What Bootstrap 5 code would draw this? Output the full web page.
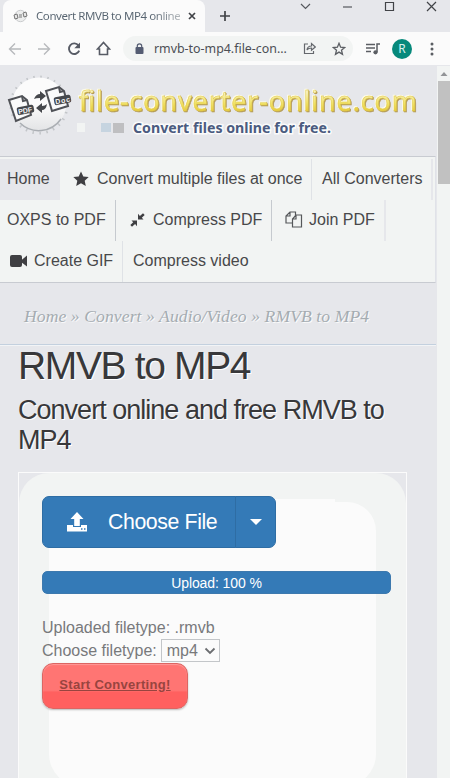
<!DOCTYPE html>
<html lang="en">
<head>
<meta charset="utf-8">
<title>Convert RMVB to MP4 online</title>
<link href="https://cdn.jsdelivr.net/npm/bootstrap@5.3.0/dist/css/bootstrap.min.css" rel="stylesheet">
<style>
:root{--page:#e6e7eb;--soft:#f2f4f3;--paper:#fbfbfb;--blue:#347ab7;--ink:#3f3f42}
body{width:450px;height:778px;background:var(--page);font-family:"Liberation Sans",sans-serif;font-size:16px;line-height:20px;color:var(--ink)}
svg{display:block;flex:none}
.tabstrip{height:32px}
.browser-tab{width:202px;margin-left:3px;background:var(--paper);border-radius:8px 8px 0 0;padding-left:10px}
.tab-title{font:11.5px/32px "Noto Sans",sans-serif;letter-spacing:-.42px;width:144px;margin-left:8px;white-space:nowrap;background:linear-gradient(90deg,#56636f 80%,#b5babe);-webkit-background-clip:text;background-clip:text;color:transparent}
.win{width:42px;height:14px}
.win-group{margin-right:-6px}
.plus{margin-left:14px}
.toolbar{height:33px;background:var(--paper)}
.tool{width:29.5px;display:flex;justify-content:center}
.omni{width:230px;height:25px;border-radius:13px;background:var(--soft);margin-left:5px}
.lock{margin-left:12px}.share{margin-left:16px}.star{margin-left:16px}.queue{margin-left:12px}.dots{margin-left:18px}
.address{font:12.4px/24px "Noto Sans",sans-serif;width:133px;margin-left:10px;white-space:nowrap;color:#4c4f55}
.avatar{width:20px;height:20px;border-radius:50%;background:#06897b;color:#d8f0ec;font:12px/20px "Noto Sans",sans-serif;text-align:center;margin-left:11px}
.viewport{margin-top:1px;height:712px}
.content{width:437px;height:712px;overflow:hidden}
.scroller{width:13px;background:var(--soft);padding:5px 0 0 1px}
.thumb{height:103px;background:#c1c1c1;margin-top:5px}
.logo-row{height:90px}
.gold-text{filter:drop-shadow(-1px -1px 0 #fdfbe8) drop-shadow(1px 1px 0 #b39a58)}
.menu{height:127px;width:436px;background:var(--soft);border:1px solid #c8cbd1;border-width:1px 1px 1px 0;border-right-color:#e0e2e8;padding-top:2px}
.menu-row{height:41px}
.menu-row a{color:#48484a;text-decoration:none;line-height:38px;padding-left:7px;display:flex;align-items:center;white-space:nowrap;border-right:1px solid #dfe2e6;padding-bottom:2px}
.menu-row a.thick{border-right:2px solid var(--page)}
.menu-row a.firm{border-right-color:#c6cacf}
.menu-row a.inset{padding-left:10px}
.w-home{width:60px;background:var(--page)}.w-multi{width:252px}.w-all{width:121px}
.w-oxps{width:116px}.w-press{width:156px}.w-join{width:114px}.w-gif{width:123px}
.ico-star{margin:0 8px 0 6px}.ico-press{margin:0 8px 0 7px}.ico-join{margin:0 6px}.ico-cam{margin:0 7px 0 3px}.ico-up{margin:0 20px 0 23px}
.crumbs{height:62px;border-bottom:1px solid #c3d0de;box-shadow:0 1px 0 #f2f4f6;padding:23px 0 0 24px;font:italic 17.6px/20px "Liberation Serif",serif;letter-spacing:.09px;color:#a5acb1;text-shadow:1px 1px 0 #fbfbfb;width:436px;white-space:nowrap}
h1{font-size:39px;line-height:44px;letter-spacing:-1.35px;margin:-1px 0 6px 18px;color:#38383a;text-shadow:1px 1px 0 #fff;font-weight:400;white-space:nowrap}
h2{font-size:27px;line-height:30px;letter-spacing:-.98px;margin:0 0 17px 18px;padding-top:1px;color:#38383a;text-shadow:1px 1px 0 #fff;font-weight:400}
.frame{margin-left:18px;width:389px;height:330px;border:1px solid var(--paper);position:relative;padding:23px 15px 0 23px;isolation:isolate;overflow:hidden}
.frame::before{content:"";position:absolute;inset:0;background:linear-gradient(var(--paper),var(--paper)) 30px 26px/286px 20px no-repeat var(--soft);border-radius:30px 30px 0 0;z-index:-2}
.frame::after{content:"";position:absolute;left:30px;top:29px;width:327px;height:284px;border-radius:0 29px 32px 32px;background:var(--paper);z-index:-1}
.choose{width:235px;height:52px;margin-bottom:23px}
.choose .btn{background:var(--blue);border:1px solid #2e6da4;border-radius:7px;color:#fff;font-size:21.3px;line-height:24px;padding:0}
.choose .pick{width:194px;letter-spacing:-.4px}
.choose .more{width:41px}
.progress{height:23px;width:349px;border-radius:5px;background:var(--paper);margin-bottom:22px}
.progress-bar{background:var(--blue);font-size:14px;letter-spacing:-.1px;border-radius:5px;border:1px solid #3d79ae}
.info{color:#78797b;line-height:23px;margin-bottom:1px}
.kind{width:59px;height:23px;border:1px solid #c3c6c9;background:var(--paper);padding:0 3px 0 5px;margin-left:4px;line-height:22px}
.go{width:146px;height:46px;border-radius:11px;border:1px solid #dc6562;background:linear-gradient(#ff7573 60%,#ff605f 64%);box-shadow:0 1px 2px #b9b9b9,inset 0 1px 1px #ff9a98;color:#98443f;font-weight:700;font-size:13px;letter-spacing:.3px;line-height:42px;text-align:center;display:block;white-space:nowrap}
.go:hover{color:#98443f}
</style>
<script src="https://cdn.jsdelivr.net/npm/bootstrap@5.3.0/dist/js/bootstrap.bundle.min.js"></script>
</head>
<body class="overflow-hidden">
<header>
 <div class="tabstrip d-flex">
  <div class="browser-tab d-flex align-items-center">
   <svg width="15" height="14" viewBox="0 0 15 14"><circle cx="7.5" cy="7" r="5.7" fill="#eceded" stroke="#c9cbcd"/><path d="M1 6l3-1 1 4-3 1zM10 4l3-1 1 4-3 1z" fill="#e8e8e8" stroke="#777"/><path d="M6 6h3M6 8h3" stroke="#777"/></svg>
   <span class="tab-title">Convert RMVB to MP4 online</span>
   <svg class="ms-2" width="11" height="10" viewBox="0 0 11 10"><path d="M1 2l6 6M7 2l-6 6" stroke="#414347" stroke-width="1.7"/></svg>
  </div>
  <svg class="plus" width="13" height="32" viewBox="0 0 13 32"><path d="M1 16h10M6 11v10" stroke="#414347" stroke-width="1.7"/></svg>
  <div class="d-flex ms-auto win-group">
   <svg class="win" viewBox="0 0 42 14"><path d="M13 4l4.500 4.500L22 4" fill="none" stroke="#55585d" stroke-width="1.200"/></svg>
   <svg class="win" viewBox="0 0 42 14"><path d="M13 7h9" stroke="#55585d" stroke-width="1.200"/></svg>
   <svg class="win" viewBox="0 0 42 14"><path d="M13.500 2.500h8v8h-8z" fill="none" stroke="#414347" stroke-width="1.200"/></svg>
   <svg class="win" viewBox="0 0 42 14"><path d="M13 2l9 9M22 2l-9 9" stroke="#414347" stroke-width="1.200"/></svg>
  </div>
 </div>
 <div class="toolbar d-flex align-items-center">
  <span class="tool"><svg width="14" height="14" viewBox="0 0 14 14"><path d="M13 7H1.500M7 1.500L1.500 7 7 12.500" fill="none" stroke="#b7b9bc" stroke-width="1.400"/></svg></span>
  <span class="tool"><svg width="14" height="14" viewBox="0 0 14 14"><path d="M1 7h11.500M7 1.500L12.500 7 7 12.500" fill="none" stroke="#b7b9bc" stroke-width="1.400"/></svg></span>
  <span class="tool"><svg width="14" height="14" viewBox="0 0 14 14"><path d="M11.500 3.500A5.300 5.300 0 1 0 12.200 8.700" fill="none" stroke="#575b65" stroke-width="1.900"/><path d="M13 .5v5.700H7.300z" fill="#575b65"/></svg></span>
  <span class="tool"><svg width="15" height="15" viewBox="0 0 15 15"><path d="M1.500 8L7.500 1.500l6 6.500H11.500v5.500h-8V8z" fill="none" stroke="#575b65" stroke-width="1.600"/></svg></span>
  <div class="omni d-flex align-items-center">
   <svg class="lock" width="9" height="12" viewBox="0 0 9 12"><rect x=".5" y="4" width="8" height="7" rx="1" fill="#545c72"/><path d="M2.300 5V3a2.200 2.200 0 0 1 4.400 0v2" fill="none" stroke="#545c72" stroke-width="1.200"/></svg>
   <span class="address">rmvb-to-mp4.file-con...</span>
   <svg class="share" width="13" height="13" viewBox="0 0 13 13" fill="none" stroke="#65686d" stroke-width="1.200"><path d="M5 2H1.500v9.500h9V9"/><path d="M4 8c.3-3 2-4 4.500-4V1.500L12.300 5 8.500 8.300V6C6.500 6 5 6.500 4 8z"/></svg>
   <svg class="star" width="14" height="14" viewBox="0 0 14 14"><path d="M7 1.300l1.600 3.900 4.100.3-3.200 2.700 1 4.100L7 10.100l-3.500 2.200 1-4.100L1.300 5.500l4.100-.3z" fill="none" stroke="#5b5e63" stroke-width="1.300"/></svg>
  </div>
  <svg class="queue" width="16" height="14" viewBox="0 0 16 14"><path d="M1 2.500h9M1 6h9M1 9.500h5M12 10V2h3" fill="none" stroke="#5b5e63" stroke-width="1.500"/><circle cx="10.500" cy="10.300" r="2.100" fill="#5b5e63"/></svg>
  <span class="avatar">R</span>
  <svg class="dots" width="4" height="14" viewBox="0 0 4 14" fill="#5b5e63"><circle cx="2" cy="2" r="1.500"/><circle cx="2" cy="7" r="1.500"/><circle cx="2" cy="12" r="1.500"/></svg>
 </div>
</header>
<main class="viewport d-flex">
 <div class="content">
  <div class="logo-row">
   <svg width="437" height="90" viewBox="0 0 437 90">
    <defs><linearGradient id="gold" x1="0" y1="0" x2="0" y2="1"><stop offset=".3" stop-color="#f8f2bd"/><stop offset=".6" stop-color="#f0e164"/><stop offset=".85" stop-color="#e3c534"/></linearGradient>
    <linearGradient id="disc" x1="0" y1="0" x2="0" y2="1"><stop offset=".5" stop-color="#fbfbfb"/><stop offset="1" stop-color="#e2e3e5"/></linearGradient></defs>
    <circle cx="39" cy="39" r="28" fill="none" stroke="#c3c6c9" stroke-width="3" stroke-dasharray="1.500 5.500"/>
    <circle cx="39" cy="38.500" r="27" fill="url(#disc)"/>
    <path d="M20 57a27 27 0 0 0 41-4" fill="none" stroke="#aaaeb3" stroke-width="1.500"/>
    <g fill="#fafafa" stroke="#505257" stroke-width="2"><path d="M9 34l13-4 5 4 4 15-15 6z"/><path d="M22 30l1 5 4-1" fill="none"/><path d="M46 25l13-4 5 4 4 15-16 5z"/><path d="M59 21l1 5 4-1" fill="none"/></g>
    <g fill="#46484c"><path d="M34 33q2-5 6-5v-3l6 5-6 5v-3q-4 0-6 1z"/><path d="M47 38q-1 6-5 6v3l-6-5 6-5v3q3 0 5-2z"/><rect x="17" y="40" width="17" height="8" rx="2" transform="rotate(-11 25 44)"/><rect x="54" y="30" width="17" height="8" rx="2" transform="rotate(-11 62 34)"/></g>
    <g fill="#f5f5f5" font-family="Liberation Sans" font-weight="700" font-size="7"><text x="18" y="47" textLength="14" transform="rotate(-11 25 44)">PDF</text><text x="55" y="37" textLength="15" transform="rotate(-11 62 34)">Doc</text></g>
    <text class="gold-text" x="79" y="44.500" textLength="338" font-family="Noto Sans" font-size="27" font-weight="400" fill="url(#gold)" stroke="#e2c94a" stroke-width=".5">file-converter-online.com</text>
    <path fill="#f2f4f3" d="M77 57h8v9h-8z"/><path fill="#c6d4e0" d="M101 57h10v9h-10z"/><path fill="#bfbfc1" d="M113 57h11v10h-11z"/>
    <text x="133" y="67" textLength="198" font-family="Noto Sans" font-weight="700" font-size="14" fill="#4b5b80" stroke="#fbfbfb" stroke-width="3" paint-order="stroke" lengthAdjust="spacingAndGlyphs">Convert files online for free.</text>
   </svg>
  </div>
  <nav class="menu">
   <div class="menu-row d-flex">
    <a class="w-home border-0" href="#">Home</a>
    <a class="w-multi" href="#"><svg class="ico-star" width="16" height="16" viewBox="0 0 16 16"><path d="M8 .5l2.300 4.900 5.400.6-4 3.700 1.100 5.300L8 12.300 3.200 15l1.100-5.300-4-3.700 5.400-.6z" fill="#3f3f42"/></svg>Convert multiple files at once</a>
    <a class="w-all thick inset" href="#">All Converters</a>
   </div>
   <div class="menu-row d-flex">
    <a class="w-oxps firm" href="#">OXPS to PDF</a>
    <a class="w-press firm" href="#"><svg class="ico-press" width="15" height="14" viewBox="0 0 15 14"><path d="M8 .8v5.700h5.500l-1.700-1.700L14.700 2 13 .3 9.900 3zM7 13.200V7.500H1.500l1.700 1.700L.3 12 2 13.700 5.100 11z" fill="#3f3f42"/></svg>Compress PDF</a>
    <a class="w-join thick" href="#"><svg class="ico-join" width="18" height="17" viewBox="0 0 18 17" fill="#f2f4f3" stroke="#55575a" stroke-width="1.200"><path d="M5 1h5.500v11H1V5zM5 1v4H1"/><path d="M11 4h5.500v12H7.500V8zM11 4v4H7.500"/></svg>Join PDF</a>
   </div>
   <div class="menu-row d-flex">
    <a class="w-gif" href="#"><svg class="ico-cam" width="17" height="12" viewBox="0 0 17 12"><rect width="12" height="12" rx="2" fill="#3f3f42"/><path d="M11 5.500L17 .5v11L11 7z" fill="#3f3f42"/></svg>Create GIF</a>
    <a class="border-0 inset" href="#">Compress video</a>
   </div>
  </nav>
  <div class="crumbs">Home » Convert » Audio/Video » RMVB to MP4</div>
  <h1>RMVB to MP4</h1>
  <h2>Convert online and free RMVB to<br>MP4</h2>
  <section class="frame">
   <div class="choose btn-group d-flex">
    <button class="btn pick flex-grow-0 d-flex align-items-center"><svg class="ico-up" width="22" height="20" viewBox="0 0 22 20" fill="#fff"><path d="M11 0l6.500 7h-3.700v7H8.200V7H4.500z"/><path d="M1 13h6v2h8v-2h6v6.500H1z"/><path d="M15 17h1.500M18 17h1.500" stroke="#347ab7" stroke-width="1.300"/></svg>Choose File</button>
    <button class="btn more flex-grow-0 d-flex align-items-center justify-content-center" aria-label="More"><svg width="12" height="6" viewBox="0 0 12 6"><path d="M0 0h12L6 6z" fill="#fff"/></svg></button>
   </div>
   <div class="progress"><div class="progress-bar w-100">Upload: 100 %</div></div>
   <div class="info">
    <div>Uploaded filetype: .rmvb</div>
    <div class="d-flex">Choose filetype:<span class="kind d-flex align-items-center justify-content-between">mp4<svg width="12" height="8" viewBox="0 0 12 8"><path d="M1.500 1.500L6 6l4.500-4.500" fill="none" stroke="#6b6d70" stroke-width="1.800"/></svg></span></div>
   </div>
   <a class="go" href="#">Start Converting!</a>
  </section>
 </div>
 <div class="scroller"><svg width="12" height="5" viewBox="0 0 12 5"><path d="M2.500 5L6 1l3.500 4z" fill="#929497"/></svg><div class="thumb"></div></div>
</main>
</body>
</html>
